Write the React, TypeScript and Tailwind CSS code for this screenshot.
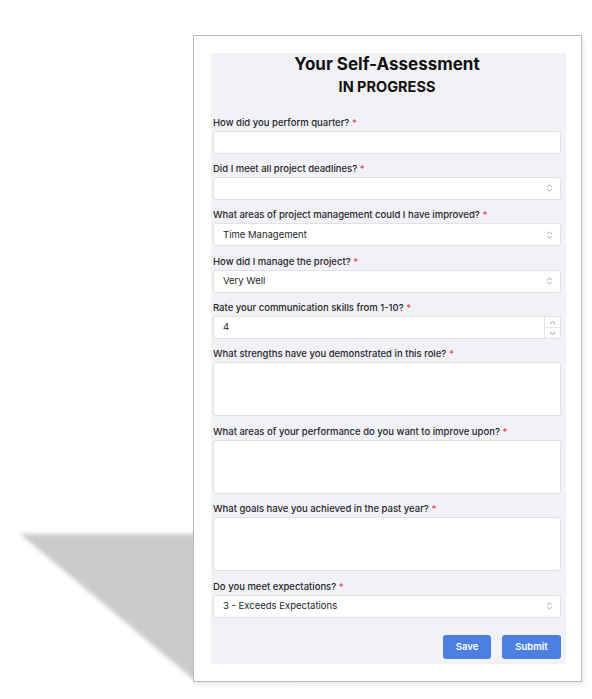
import React from "react";

const Chevrons = () => (
  <svg width="7" height="10" viewBox="0 0 7 10" fill="none" stroke="#a3a3a8" strokeWidth="1" strokeLinecap="round" strokeLinejoin="round">
    <path d="M1.5 3.8 L3.5 1.8 L5.5 3.8" />
    <path d="M1.5 6.2 L3.5 8.2 L5.5 6.2" />
  </svg>
);

const Label = ({ text }: { text: string }) => (
  <div className="h-[16px] leading-[16px] text-[9.5px] font-medium text-[#26262b] whitespace-nowrap">
    {text} <span className="text-[#e5484d]">*</span>
  </div>
);

const boxBase = "w-full bg-white border border-[#e1e1e6] rounded-[3px]";

const TextBox = () => <div className={`${boxBase} h-[23px]`} />;

const SelectBox = ({ value }: { value?: string }) => (
  <div className={`${boxBase} h-[23px] flex items-center justify-between pl-[9px] pr-[7px]`}>
    <span className="text-[9.5px] text-[#26262b]">{value ?? ""}</span>
    <Chevrons />
  </div>
);

const NumberBox = ({ value }: { value: string }) => (
  <div className={`${boxBase} h-[23px] flex items-stretch`}>
    <div className="flex-1 flex items-center pl-[9px] text-[9.5px] text-[#26262b]">{value}</div>
    <div className="w-[16px] border-l border-[#e6e6ea] flex flex-col">
      <div className="flex-1 flex items-center justify-center border-b border-[#e6e6ea]">
        <svg width="7" height="5" viewBox="0 0 7 5" fill="none" stroke="#8e8e94" strokeWidth="1" strokeLinecap="round" strokeLinejoin="round">
          <path d="M1.2 3.6 L3.5 1.4 L5.8 3.6" />
        </svg>
      </div>
      <div className="flex-1 flex items-center justify-center">
        <svg width="7" height="5" viewBox="0 0 7 5" fill="none" stroke="#8e8e94" strokeWidth="1" strokeLinecap="round" strokeLinejoin="round">
          <path d="M1.2 1.4 L3.5 3.6 L5.8 1.4" />
        </svg>
      </div>
    </div>
  </div>
);

const AreaBox = () => <div className={`${boxBase} h-[54px]`} />;

const Field = ({ label, children }: { label: string; children: React.ReactNode }) => (
  <div className="flex flex-col">
    <Label text={label} />
    {children}
  </div>
);

export default function App() {
  return (
    <div className="relative w-[592px] h-[699px] bg-white overflow-hidden pt-[35px] pl-[193px] font-['Inter',sans-serif]">
      <svg className="absolute left-0 top-0" width="592" height="699" viewBox="0 0 592 699">
        <defs>
          <filter id="blur" x="-20%" y="-20%" width="140%" height="140%">
            <feGaussianBlur stdDeviation="2" />
          </filter>
        </defs>
        <polygon points="20,534 300,534 300,679 193,679" fill="#cbcbcb" filter="url(#blur)" />
      </svg>
      <div className="relative w-[389px] h-[647px] border border-[#b9b9b9] bg-white pt-[17px] pl-[17px] shadow-[2px_3px_6px_rgba(0,0,0,0.08)]">
        <div className="w-[355px] h-[611px] bg-[#f2f2f6] pl-[2px] pr-[5px] flex flex-col">
          <div className="text-center text-[17px] leading-[22px] font-bold text-[#111]">Your Self-Assessment</div>
          <div className="mt-[3px] text-center text-[14.5px] leading-[17px] font-bold text-[#111]">IN PROGRESS</div>
          <div className="mt-[19.5px] flex flex-col gap-[7.4px]">
            <Field label="How did you perform quarter?"><TextBox /></Field>
            <Field label="Did I meet all project deadlines?"><SelectBox /></Field>
            <Field label="What areas of project management could I have improved?"><SelectBox value="Time Management" /></Field>
            <Field label="How did I manage the project?"><SelectBox value="Very Well" /></Field>
            <Field label="Rate your communication skills from 1-10?"><NumberBox value="4" /></Field>
            <Field label="What strengths have you demonstrated in this role?"><AreaBox /></Field>
            <Field label="What areas of your performance do you want to improve upon?"><AreaBox /></Field>
            <Field label="What goals have you achieved in the past year?"><AreaBox /></Field>
            <Field label="Do you meet expectations?"><SelectBox value="3 - Exceeds Expectations" /></Field>
          </div>
          <div className="mt-[17.4px] flex justify-end gap-[11px]">
            <button className="w-[48px] h-[24px] rounded-[3px] bg-[#4d7fe0] text-white text-[9.5px] font-semibold">Save</button>
            <button className="w-[59px] h-[24px] rounded-[3px] bg-[#4d7fe0] text-white text-[9.5px] font-semibold">Submit</button>
          </div>
        </div>
      </div>
    </div>
  );
}
